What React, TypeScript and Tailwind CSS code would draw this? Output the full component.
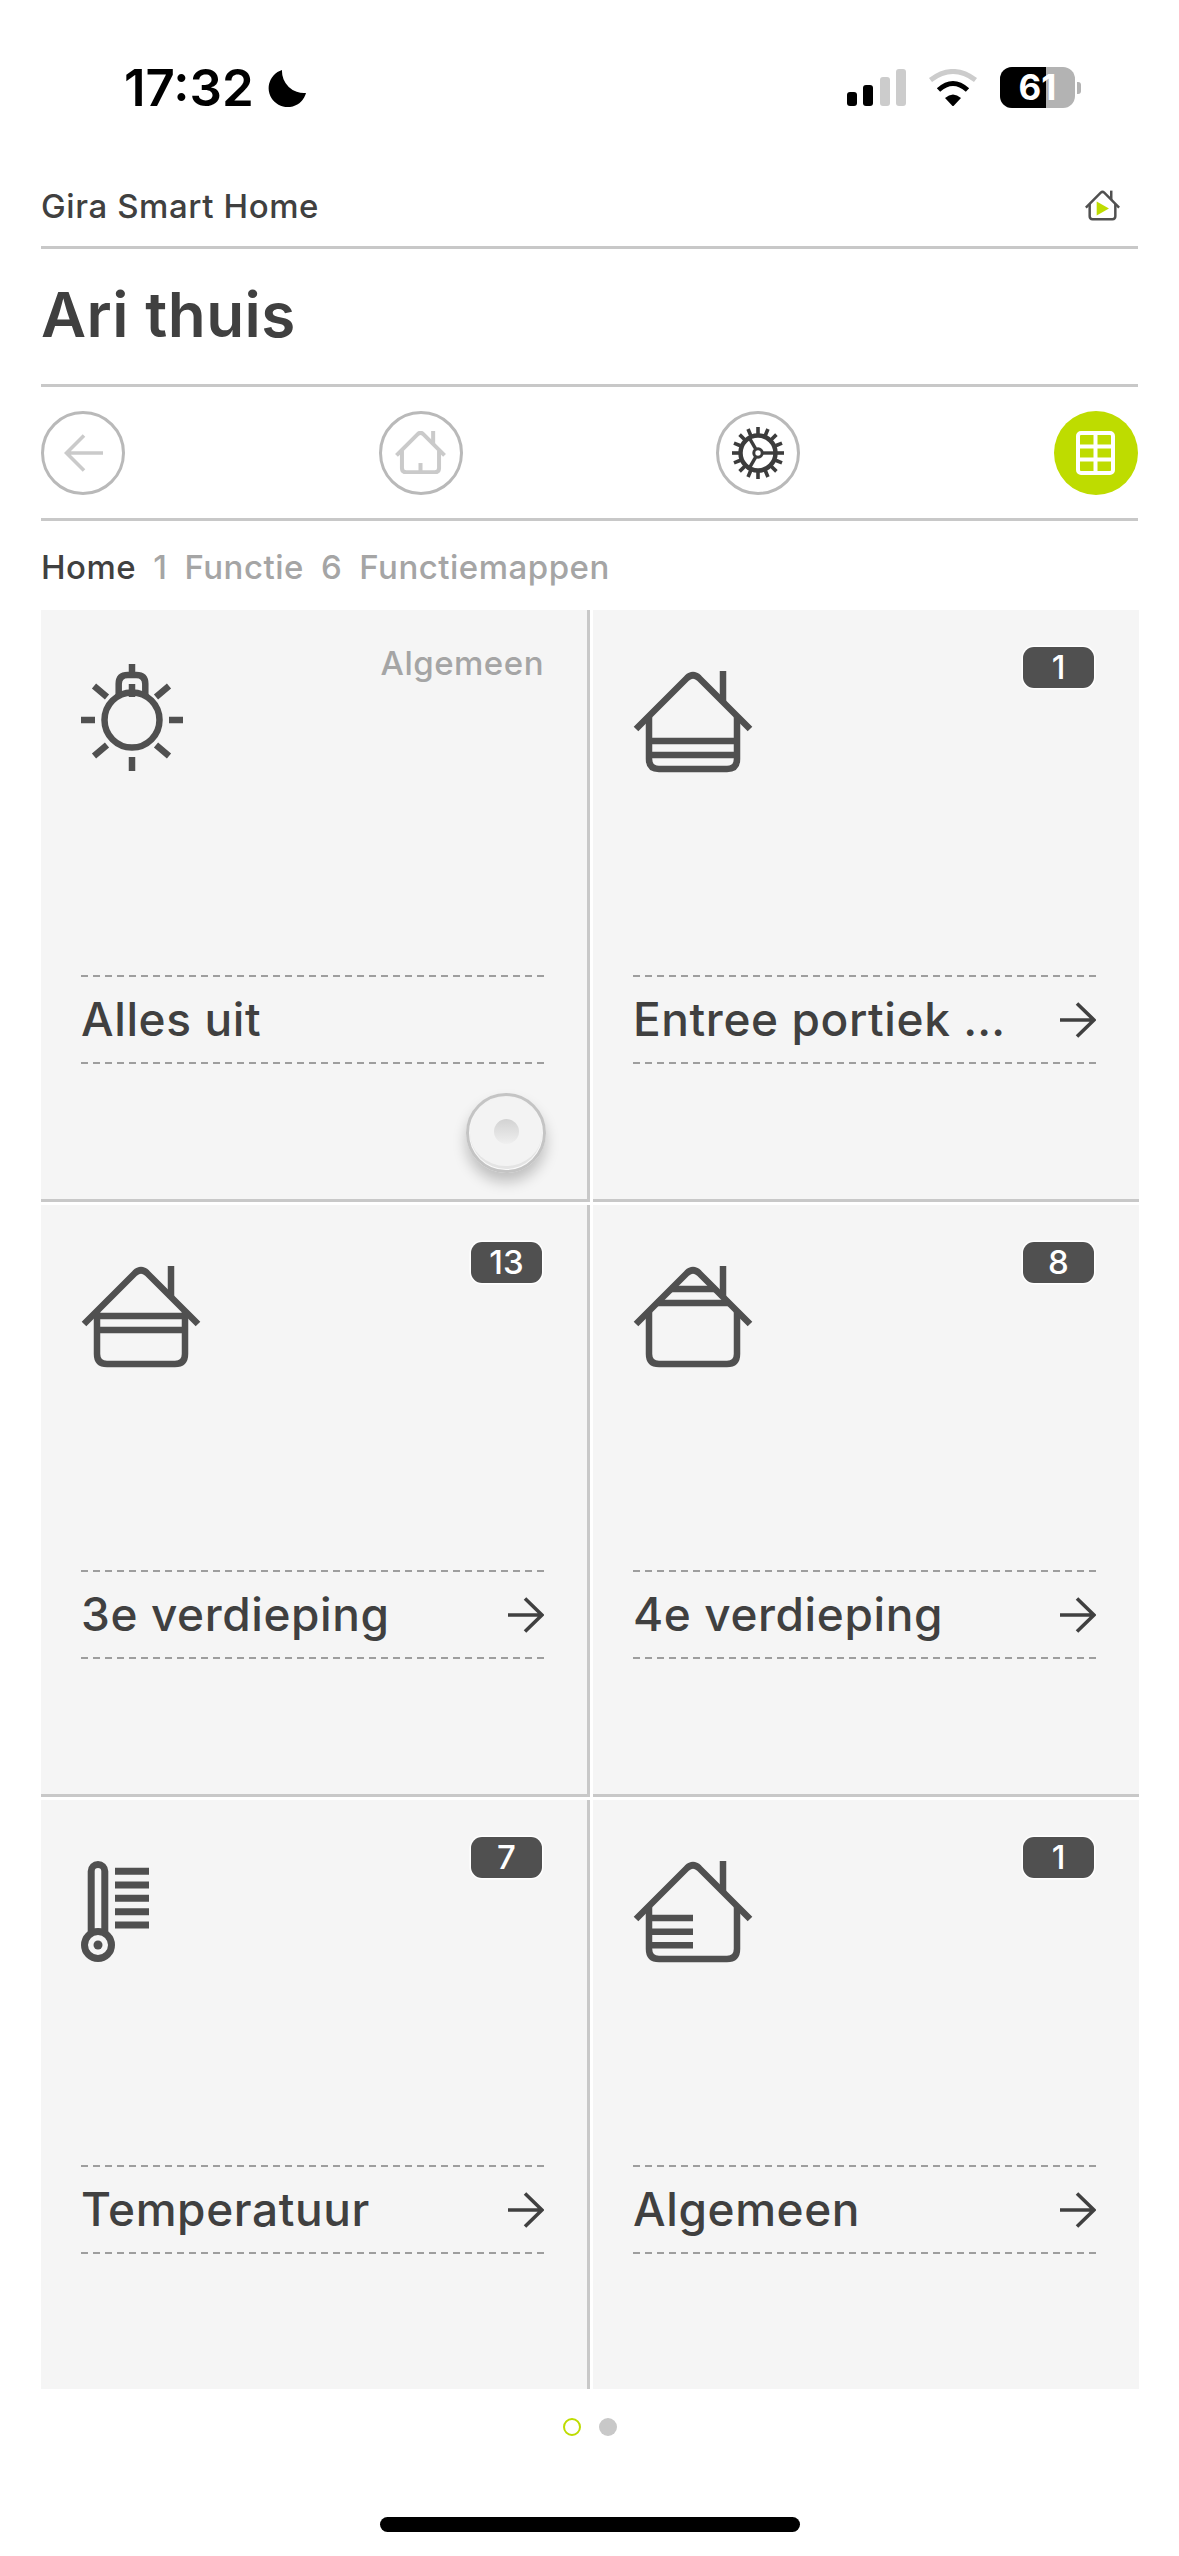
import type { ReactNode } from "react";

const ink = "#505050";

function House({ className, stroke = ink, sw = 6.5, children }: { className: string; stroke?: string; sw?: number; children?: ReactNode }) {
  return (
    <svg viewBox="0 0 120 102" className={className} fill="none" stroke={stroke} strokeWidth={sw}>
      <path d="M3 58L54 7Q60 1.5 66 7L117 58" />
      <path d="M90 0V32" />
      <path d="M16 46V88Q16 98 26 98H94Q104 98 104 88V46" />
      {children}
    </svg>
  );
}

function BulbIcon() {
  return (
    <svg viewBox="0 0 102 107" className="w-[102px] h-[107px] -mt-[7px]" fill="none" stroke={ink} strokeWidth="6.5">
      <path d="M37.7 33V20Q37.7 11 46.7 11H55.3Q64.3 11 64.3 20V33" />
      <circle cx="51" cy="56" r="27.5" />
      <path d="M51 0V11M51 20V33" />
      <path d="M0 56H14M88 56H102M51 93V107" />
      <path d="M13 22L26 33M88 22L75 33M26 81L13 92M75 81L88 92" />
    </svg>
  );
}

function ThermoIcon() {
  return (
    <svg viewBox="0 0 68 101" className="w-[68px] h-[101px]" fill="none" stroke={ink} strokeWidth="7">
      <path d="M10.2 73V10.3a6.8 6.8 0 0 1 13.6 0V73" />
      <circle cx="17" cy="84" r="13.5" />
      <circle cx="17" cy="84" r="4.5" fill={ink} stroke="none" />
      <path d="M34 10.3H68M34 24H68M34 37.3H68M34 50.7H68M34 64H68" />
    </svg>
  );
}

function GearIcon() {
  const teeth = Array.from({ length: 16 }, (_, i) => i * 22.5);
  return (
    <svg viewBox="0 0 52 52" className="w-[52px] h-[52px]" fill="none" stroke="#3c3c3c">
      <circle cx="26" cy="26" r="17.5" strokeWidth="4.5" />
      {teeth.map((a) => (
        <path key={a} d="M26 0V7" strokeWidth="3.6" transform={`rotate(${a} 26 26)`} />
      ))}
      {[90, 210, 330].map((a) => (
        <path key={a} d="M26 8V21" strokeWidth="3.4" transform={`rotate(${a} 26 26)`} />
      ))}
      <circle cx="26" cy="26" r="4.2" fill="#ffffff" strokeWidth="3" />
    </svg>
  );
}

function Arrow() {
  return (
    <svg viewBox="0 0 36 36" className="w-[36px] h-[36px] shrink-0" fill="none" stroke="#404040" strokeWidth="3.6">
      <path d="M0 18H34M17 1.5L34 18L17 34.5" />
    </svg>
  );
}

function Dashes() {
  return <div className="h-[2px] w-full bg-[repeating-linear-gradient(90deg,#9e9e9e_0_7px,transparent_7px_12px)]" />;
}

function Badge({ n }: { n: string }) {
  return (
    <div className="mt-[37px] mr-[2px] w-[71px] h-[41px] rounded-[11px] bg-[#505050] flex items-center justify-center text-white text-[33px] font-medium leading-none shadow-[0_0_0_1.5px_#ffffff]">
      {n}
    </div>
  );
}

function Tile({ icon, label, badge, hasArrow = true, children, top, className = "" }: { icon: ReactNode; label: string; badge?: string; hasArrow?: boolean; children?: ReactNode; top?: ReactNode; className?: string }) {
  return (
    <div className={`bg-[#f5f5f5] pl-[40px] pr-[43px] h-[589px] flex flex-col ${className}`}>
      <div className="h-[365px] flex justify-between items-start">
        <div className="mt-[61px]">{icon}</div>
        {badge ? <Badge n={badge} /> : top}
      </div>
      <Dashes />
      <div className="h-[85px] flex items-center justify-between text-[46px] font-medium text-[#404040] tracking-[0.6px]">
        <span className="whitespace-nowrap">{label}</span>
        {hasArrow && <Arrow />}
      </div>
      <Dashes />
      {children}
    </div>
  );
}

function PressButton() {
  return (
    <div className="self-end mt-[29px] -mr-[2px] w-[80px] h-[80px] rounded-full border-[3px] border-[#c4c4c4] bg-[linear-gradient(180deg,#f1f1f1,#fafafa)] shadow-[0_9px_14px_rgba(0,0,0,0.22)] flex items-center justify-center">
      <div className="w-[72px] h-[72px] rounded-full bg-[#f3f3f3] border-b-[3px] border-[#e4e4e4] flex items-center justify-center">
        <div className="w-[25px] h-[25px] rounded-full bg-[linear-gradient(180deg,#d2d2d2,#efefef)]" />
      </div>
    </div>
  );
}

function StatusBar() {
  return (
    <div className="h-[180px] pt-[67px] pl-[124px] pr-[98px] flex justify-between items-start text-black">
      <div className="flex items-center gap-[13px]">
        <span className="text-[51px] leading-[42px] font-semibold">17:32</span>
        <svg viewBox="0 0 39 38" className="w-[39px] h-[38px]" fill="#000000">
          <path d="M15 1A19 19 0 1 0 39 24A22 22 0 0 1 15 1Z" />
        </svg>
      </div>
      <div className="flex items-center gap-[22px] h-[41px]">
        <div className="flex items-end gap-[6.5px] h-[37px]">
          <div className="w-[9.5px] h-[14px] rounded-[3px] bg-black" />
          <div className="w-[10px] h-[21px] rounded-[3px] bg-black" />
          <div className="w-[10px] h-[29px] rounded-[3px] bg-[#cccccc]" />
          <div className="w-[10px] h-[37px] rounded-[3px] bg-[#cccccc]" />
        </div>
        <svg viewBox="0 0 50 37.5" className="w-[50px] h-[37.5px]" fill="none">
          <path d="M2.5 11Q25 -6 47.5 11" stroke="#cccccc" strokeWidth="5" />
          <path d="M10.5 21Q25 8 39.5 21" stroke="#000000" strokeWidth="5" />
          <path d="M17 29Q25 22 33 29L25 37.5Z" fill="#000000" />
        </svg>
        <div className="flex items-center gap-[2px]">
          <div className="w-[75px] h-[41px] rounded-[12px] overflow-hidden flex bg-[#b3b3b3] relative">
            <div className="w-[46px] h-full bg-black" />
            <span className="absolute inset-0 flex items-center justify-center text-white font-bold text-[35px] leading-none">61</span>
          </div>
          <div className="w-[4px] h-[12px] rounded-r-[3px] bg-[#b3b3b3]" />
        </div>
      </div>
    </div>
  );
}

function NavBar() {
  const circle = "w-[84px] h-[84px] rounded-full border-[3px] border-[#b9b9b9] flex items-center justify-center";
  return (
    <div className="h-[134px] border-b-[3px] border-[#c8c8c8] flex items-center justify-between">
      <div className={circle}>
        <svg viewBox="0 0 39 38" className="w-[39px] h-[38px]" fill="none" stroke="#cacaca" strokeWidth="3.6">
          <path d="M39 19H3M20 1.5L2.5 19L20 36.5" />
        </svg>
      </div>
      <div className={circle}>
        <House className="w-[51px] h-[43px]" stroke="#cacaca" sw={9.5}>
          <path d="M60 98V76" />
        </House>
      </div>
      <div className={circle}>
        <GearIcon />
      </div>
      <div className="w-[84px] h-[84px] rounded-full bg-[#bedc00] flex items-center justify-center">
        <svg viewBox="0 0 39 44" className="w-[39px] h-[44px]" fill="none" stroke="#ffffff" strokeWidth="4">
          <rect x="2" y="2" width="35" height="40" rx="3" />
          <path d="M19.5 2V42M2 15.5H37M2 28.5H37" />
        </svg>
      </div>
    </div>
  );
}

export default function App() {
  return (
    <div className="w-[1179px] h-[2556px] bg-white flex flex-col font-['Inter',sans-serif]">
      <StatusBar />
      <div className="px-[41px] flex flex-col">
        <div className="h-[69px] border-b-[3px] border-[#c8c8c8] flex items-start justify-between text-[#404040]">
          <span className="text-[33px] font-medium leading-[53px] tracking-[0.6px]">Gira Smart Home</span>
          <House className="w-[35px] h-[31px] mt-[10px] mr-[18px]" sw={8.5}>
            <path d="M40 37L82 61L40 85Z" fill="#bedc00" stroke="none" />
          </House>
        </div>
        <div className="h-[138px] border-b-[3px] border-[#c8c8c8] flex items-center pb-[4px]">
          <h1 className="text-[62px] font-semibold text-[#404040] leading-none tracking-[0.5px]">Ari thuis</h1>
        </div>
        <NavBar />
        <div className="h-[89px] flex items-center gap-[17px] text-[33px] font-medium text-[#a5a5a5] pt-[4px] tracking-[0.5px]">
          <span className="text-[#404040]">Home</span>
          <span>1</span>
          <span>Functie</span>
          <span>6</span>
          <span>Functiemappen</span>
        </div>
        <div className="grid grid-cols-[549px_546px] gap-x-[3px] gap-y-[3px]">
          <div className="border-r-[3px] border-b-[3px] border-[#c8c8c8]">
            <Tile
              icon={<BulbIcon />}
              label="Alles uit"
              hasArrow={false}
              top={<span className="mt-[33px] text-[33px] font-medium leading-[40px] text-[#a5a5a5] tracking-[0.5px]">Algemeen</span>}
            >
              <PressButton />
            </Tile>
          </div>
          <div className="border-b-[3px] border-[#c8c8c8]">
            <Tile
              icon={
                <House className="w-[120px] h-[102px]">
                  <path d="M16 70H104M16 84H104" />
                </House>
              }
              label="Entree portiek …"
              badge="1"
            />
          </div>
          <div className="border-r-[3px] border-b-[3px] border-[#c8c8c8]">
            <Tile
              icon={
                <House className="w-[120px] h-[102px]">
                  <path d="M16 50H104M16 64H104" />
                </House>
              }
              label="3e verdieping"
              badge="13"
            />
          </div>
          <div className="border-b-[3px] border-[#c8c8c8]">
            <Tile
              icon={
                <House className="w-[120px] h-[102px]">
                  <path d="M37 23H83M23 37H97" />
                </House>
              }
              label="4e verdieping"
              badge="8"
            />
          </div>
          <div className="border-r-[3px] border-[#c8c8c8]">
            <Tile icon={<ThermoIcon />} label="Temperatuur" badge="7" />
          </div>
          <div>
            <Tile
              icon={
                <House className="w-[120px] h-[102px]">
                  <path d="M16 57H60M16 70.7H60M16 84.3H60" />
                </House>
              }
              label="Algemeen"
              badge="1"
            />
          </div>
        </div>
        <div className="flex justify-center gap-[18px] mt-[29px]">
          <div className="w-[18px] h-[18px] rounded-full border-[2px] border-[#bedc00]" />
          <div className="w-[18px] h-[18px] rounded-full bg-[#c8c8c8]" />
        </div>
        <div className="self-center mt-[81px] w-[420px] h-[15px] rounded-full bg-black" />
      </div>
    </div>
  );
}
